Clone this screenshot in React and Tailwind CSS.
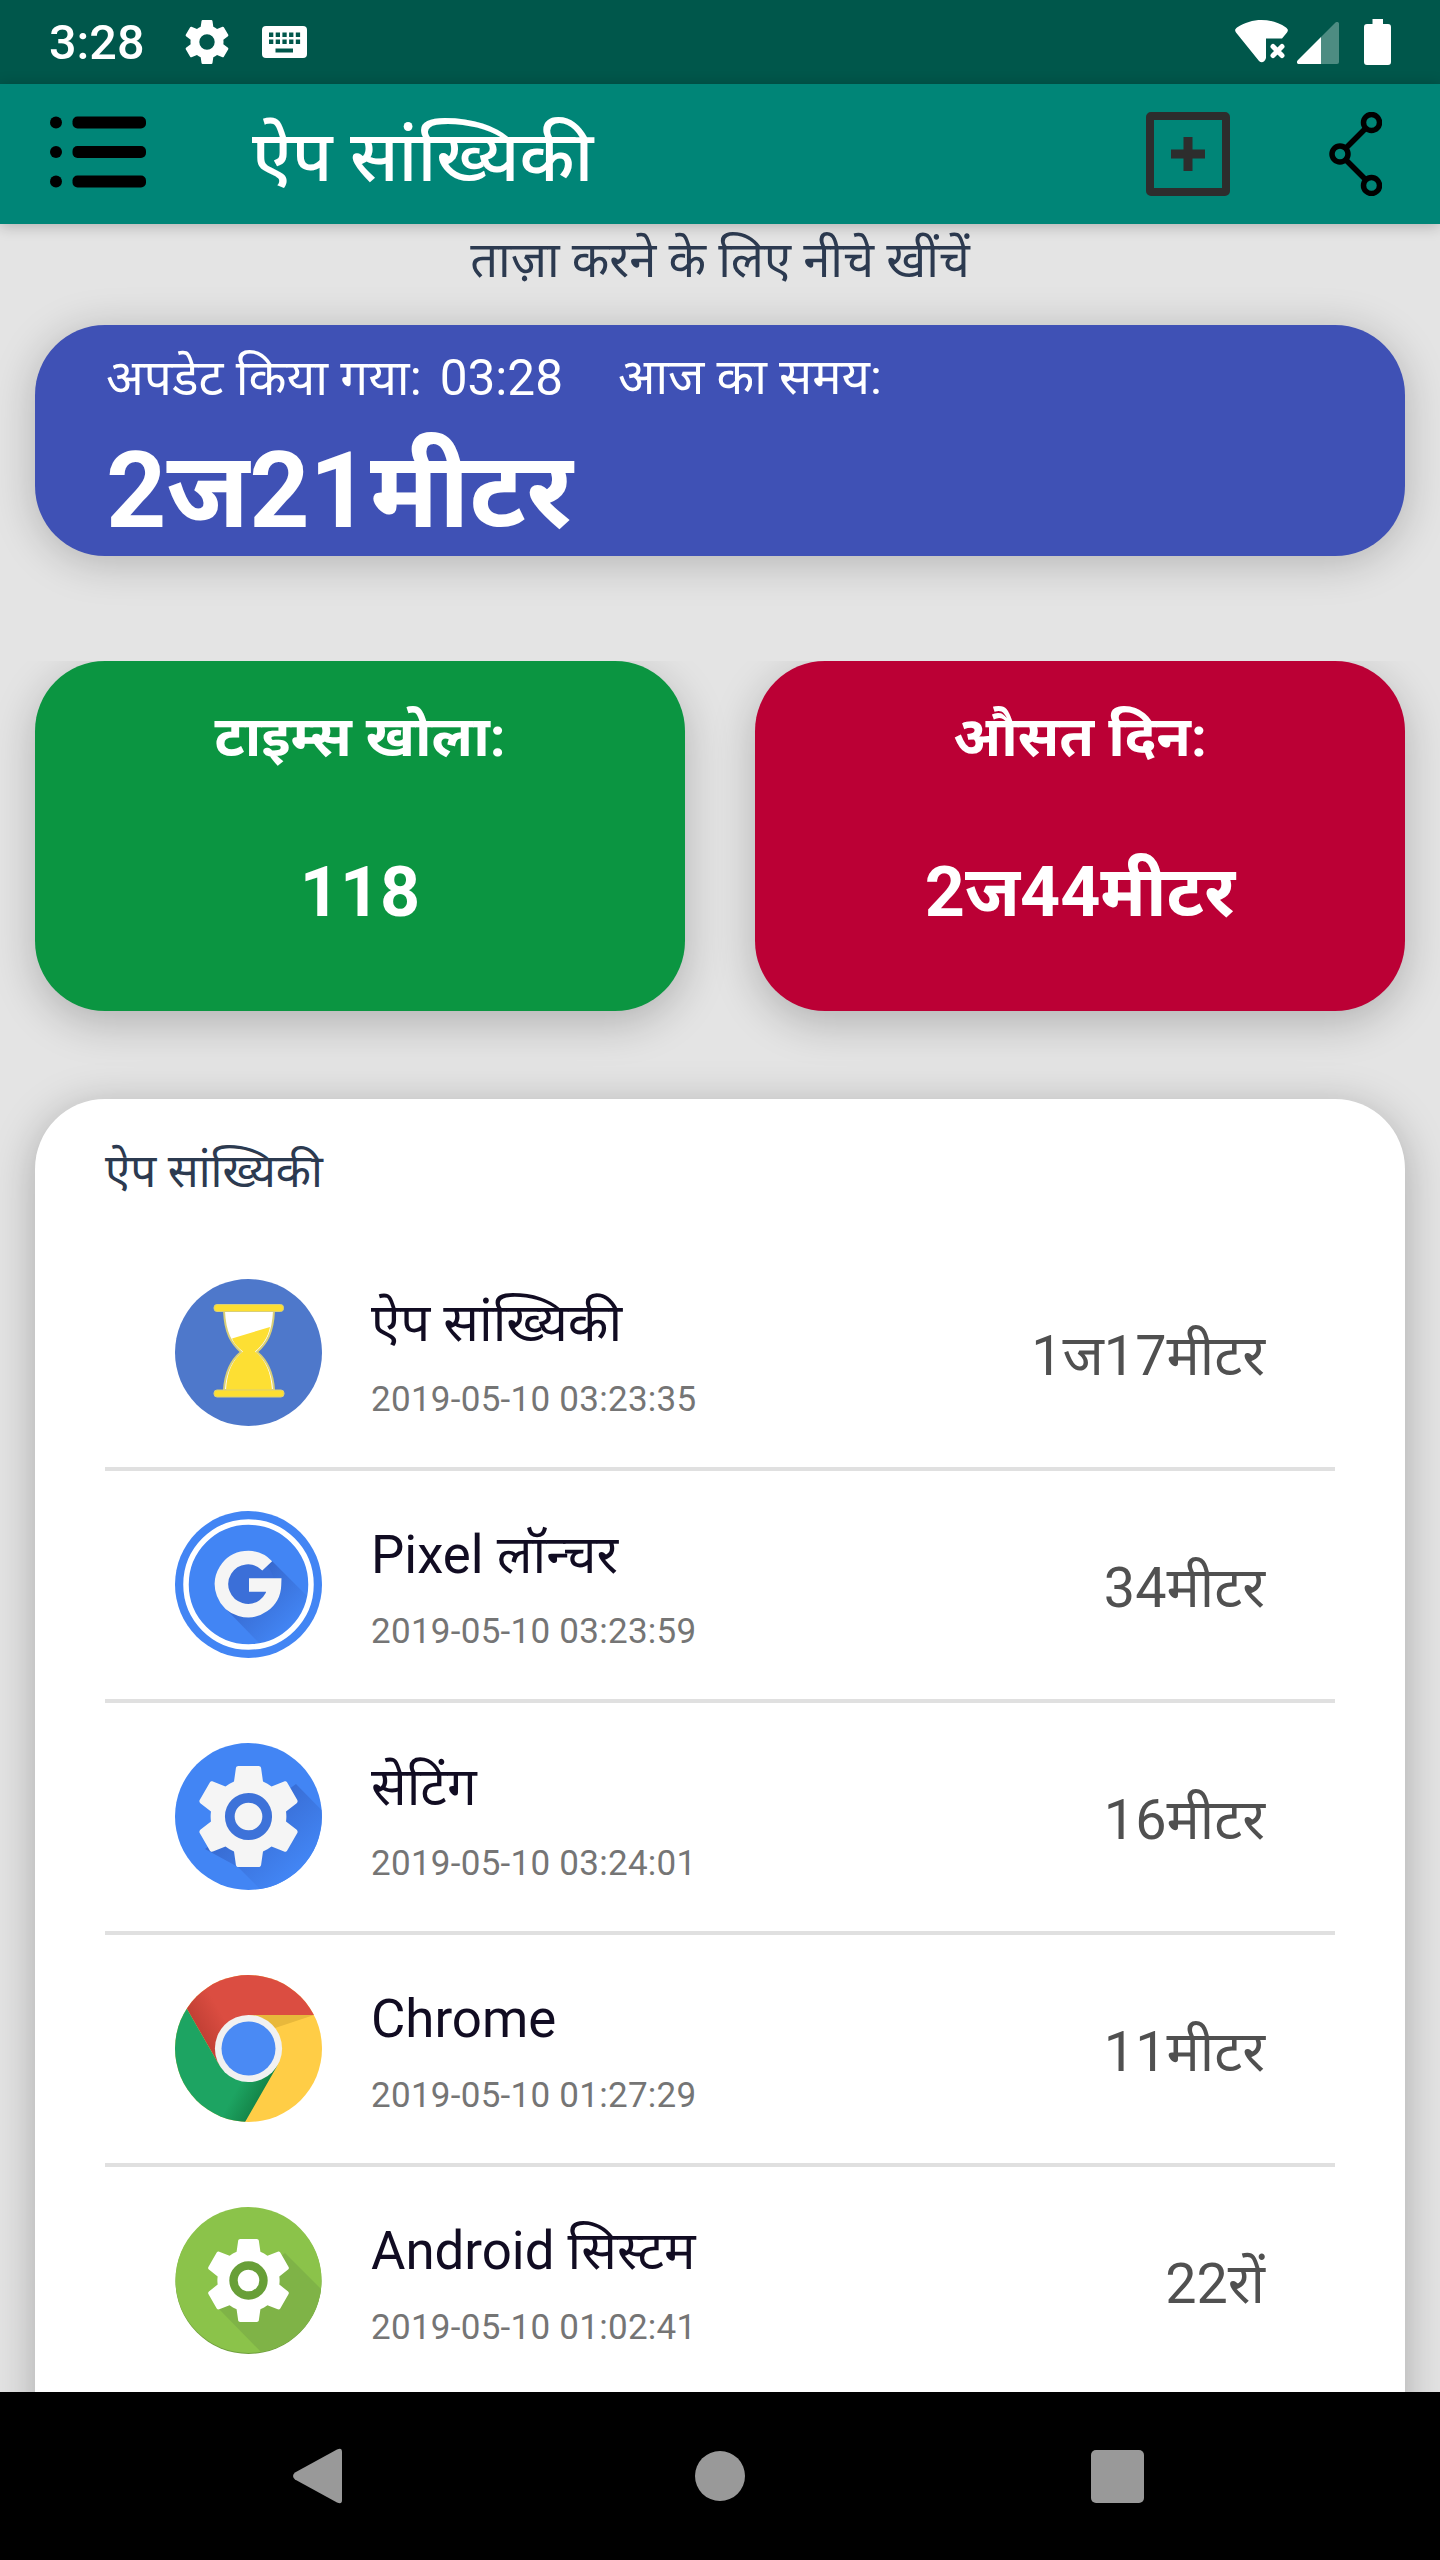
const GEAR =
  'M19.43 12.98c.04-.32.07-.64.07-.98s-.03-.66-.07-.98l2.11-1.65c.19-.15.24-.42.12-.64l-2-3.46c-.12-.22-.39-.3-.61-.22l-2.49 1c-.52-.4-1.08-.73-1.69-.98l-.38-2.65C14.46 2.18 14.25 2 14 2h-4c-.25 0-.46.18-.49.42l-.38 2.65c-.61.25-1.17.59-1.69.98l-2.49-1c-.23-.09-.49 0-.61.22l-2 3.46c-.13.22-.07.49.12.64l2.11 1.65c-.04.32-.07.65-.07.98s.03.66.07.98l-2.11 1.65c-.19.15-.24.42-.12.64l2 3.46c.12.22.39.3.61.22l2.49-1c.52.4 1.08.73 1.69.98l.38 2.65c.03.24.24.42.49.42h4c.25 0 .46-.18.49-.42l.38-2.65c.61-.25 1.17-.59 1.69-.98l2.49 1c.23.09.49 0 .61-.22l2-3.46c.12-.22.07-.49-.12-.64l-2.11-1.65z'

const HourglassIcon = () => (
  <svg viewBox="0 0 147 147" className="mb-[2px] size-[147px]">
    <circle cx="73.5" cy="73.5" r="73.5" fill="#4e78cb" />
    <path
      d="M49 32C50 54 56 64 66 73C55 82 50 94 49 111H99C98 94 93 82 82 73C92 64 98 54 99 32Z"
      fill="#fff"
      stroke="#d9cf78"
      strokeWidth="2"
    />
    <path d="M57 59.5L95 48C93 58 88 66 80 72.5C91 81 96 94 97 111H51C52 94 57 81 68 72.5C62 68 59 64 57 59.5Z" fill="#fddf33" />
    <rect x="39" y="25.5" width="69.5" height="7" rx="3" fill="#fddf33" stroke="#d9cf78" strokeWidth="1" />
    <rect x="39" y="111" width="70" height="7" rx="3" fill="#fddf33" stroke="#d9cf78" strokeWidth="1" />
  </svg>
)

const PixelIcon = () => (
  <svg viewBox="0 0 147 147" className="mb-[2px] size-[147px]">
    <defs>
      <linearGradient id="pixelShade" x1="0.2" y1="0.2" x2="0.8" y2="0.8">
        <stop offset="0" stopColor="#3564c8" />
        <stop offset="1" stopColor="#4285f4" />
      </linearGradient>
    </defs>
    <circle cx="73.5" cy="73.5" r="73.5" fill="#4285f4" />
    <path d="M97 50L132 85A60 60 0 0 1 85 133L50 97Z" fill="url(#pixelShade)" />
    <circle cx="73.5" cy="73.5" r="26" fill="#3b6fd8" />
    <circle cx="73.5" cy="73.5" r="62.5" fill="none" stroke="#fff" strokeWidth="5.5" />
    <path
      d="M92.2 54.8A26.5 26.5 0 1 0 99.5 74H74"
      fill="none"
      stroke="#f5f5f5"
      strokeWidth="13.5"
    />
  </svg>
)

const SettingsIcon = () => (
  <svg viewBox="0 0 147 147" className="mb-[2px] size-[147px]">
    <defs>
      <linearGradient id="settingsShade" x1="0.2" y1="0.2" x2="0.8" y2="0.8">
        <stop offset="0" stopColor="#3564c8" />
        <stop offset="1" stopColor="#4285f4" />
      </linearGradient>
    </defs>
    <circle cx="73.5" cy="73.5" r="73.5" fill="#4285f4" />
    <path d="M121 41L146.5 67A73.5 73.5 0 0 1 85 146L63 124L30 106Z" fill="url(#settingsShade)" />
    <path d={GEAR} transform="translate(12.9 12.9) scale(5.05)" fill="#f5f5f5" />
    <circle cx="73.5" cy="73.5" r="18.7" fill="#f5f5f5" stroke="#3d72d9" strokeWidth="9.7" />
  </svg>
)

const ChromeIcon = () => (
  <svg viewBox="0 0 147 147" className="mb-[2px] size-[147px]">
    <defs>
      <clipPath id="chromeClip">
        <circle cx="73.5" cy="73.5" r="73.5" />
      </clipPath>
      <linearGradient id="chromeRed" gradientUnits="userSpaceOnUse" x1="28" y1="62" x2="52" y2="48">
        <stop offset="0" stopColor="#c24035" />
        <stop offset="1" stopColor="#db4d41" />
      </linearGradient>
      <linearGradient id="chromeGreen" gradientUnits="userSpaceOnUse" x1="90" y1="114" x2="68" y2="102">
        <stop offset="0" stopColor="#148549" />
        <stop offset="1" stopColor="#1da462" />
      </linearGradient>
    </defs>
    <g clipPath="url(#chromeClip)">
      <rect width="147" height="147" fill="#ffcd46" />
      <path d="M73 40H139L100 53Z" fill="#e8b83b" />
      <path d="M-10 -5H150V40H73.5L44.4 90.3L12 34Z" fill="url(#chromeRed)" />
      <path d="M12 34L44.4 90.3L73.5 107L102.6 90.3L69.5 148H-5V10Z" fill="url(#chromeGreen)" />
    </g>
    <circle cx="73.5" cy="73.5" r="33.6" fill="#f1f1f1" />
    <circle cx="73.5" cy="73.5" r="27" fill="#4a8af4" />
  </svg>
)

const AndroidIcon = () => (
  <svg viewBox="0 0 147 147" className="mb-[2px] size-[147px]">
    <circle cx="73.5" cy="74" r="73" fill="#6f9f3d" />
    <circle cx="73.5" cy="73" r="73" fill="#8bc34a" />
    <path d="M110 46L146 82A73 73 0 0 1 86 145L42 100Z" fill="#7fb347" />
    <path d={GEAR} transform="translate(23.7 23.7) scale(4.15)" fill="#fff" />
    <circle cx="73.5" cy="73.5" r="15" fill="#fff" stroke="#689f38" strokeWidth="8.4" />
  </svg>
)

const apps = [
  { name: 'ऐप सांख्यिकी', date: '2019-05-10 03:23:35', time: '1ज17मीटर', Icon: HourglassIcon },
  { name: 'Pixel लॉन्चर', date: '2019-05-10 03:23:59', time: '34मीटर', Icon: PixelIcon },
  { name: 'सेटिंग', date: '2019-05-10 03:24:01', time: '16मीटर', Icon: SettingsIcon },
  { name: 'Chrome', date: '2019-05-10 01:27:29', time: '11मीटर', Icon: ChromeIcon },
  { name: 'Android सिस्टम', date: '2019-05-10 01:02:41', time: '22रों', Icon: AndroidIcon },
]

function StatusBar() {
  return (
    <div className="flex h-[84px] shrink-0 items-center bg-[#00574b] px-[49px] text-white">
      <span className="w-[95px] pt-px text-[48.5px] leading-[83px] font-medium">3:28</span>
      <svg viewBox="2 2 20 20" className="ml-[41px] size-[44px]">
        <path fillRule="evenodd" fill="#fff" d={GEAR + 'M12 15.5A3.5 3.5 0 1 1 12 8.5A3.5 3.5 0 0 1 12 15.5Z'} />
      </svg>
      <svg viewBox="0 0 45 32" className="ml-[33px] h-8 w-[45px]">
        <rect width="45" height="32" rx="4" fill="#fff" />
        {[0, 1, 2, 3, 4].map((i) => (
          <g key={i} fill="#00574b">
            <rect x={7 + i * 6.7} y="6.5" width="4.3" height="4.5" />
            <rect x={7 + i * 6.7} y="13.5" width="4.3" height="4.5" />
          </g>
        ))}
        <rect x="13.5" y="22.5" width="17.5" height="4" fill="#00574b" />
      </svg>
      <div className="ml-auto flex items-center">
        <svg viewBox="0 0 54 43" className="mb-[2px] h-[43px] w-[54px]">
          <path d="M1 12.5C-.5 10.500 0 9 2 7.5C17-2.500 36-2.500 51 7.5C53 9 53.500 10.500 52 12.5L47 18.500H31V38C29.500 42.500 26.500 43.500 24 41Z" fill="#fff" />
          <path d="M38 26.500L47 35.500M47 26.500L38 35.500" stroke="#fff" strokeWidth="5" strokeLinecap="round" />
        </svg>
        <svg viewBox="0 0 42 42" className="ml-2 mt-[2px] size-[42px]">
          <path d="M24 15L38 1C40-1 42 0 42 2V40Q42 42 40 42H24Z" fill="#4d8c82" />
          <path d="M24 15V42H2C0 42-1 40 1 38Z" fill="#fff" />
        </svg>
        <svg viewBox="0 0 27 46" className="ml-[25px] h-[46px] w-[27px]">
          <path d="M8.500 0H19V5H24Q27 5 27 8V43Q27 46 24 46H3Q0 46 0 43V8Q0 5 3 5H8.500Z" fill="#fff" />
        </svg>
      </div>
    </div>
  )
}

function AppBar() {
  return (
    <header className="z-10 flex h-[140px] shrink-0 items-center bg-[#008577] pr-[58px] pl-[50px] shadow-[0_2px_14px_rgba(0,0,0,0.24)]">
      <svg viewBox="0 0 97 72" className="mb-1 h-[72px] w-[97px]">
        {[6.5, 36, 65.5].map((y) => (
          <g key={y}>
            <circle cx="6" cy={y} r="6" />
            <rect x="22.5" y={y - 6} width="73.5" height="12" rx="5" />
          </g>
        ))}
      </svg>
      <h1 className="ml-[105px] pt-1.5 text-[70px] leading-[130px] font-medium text-white">ऐप सांख्यिकी</h1>
      <svg viewBox="0 0 84 84" className="ml-auto size-[84px]" fill="none" stroke="#2d2d2d">
        <rect x="4" y="4" width="76" height="76" rx="1" strokeWidth="8" />
        <path d="M42 25V59M25 42H59" strokeWidth="9" />
      </svg>
      <svg viewBox="0 0 54 84" className="ml-[98px] h-[84px] w-[54px]" fill="none" stroke="#000" strokeWidth="5.5">
        <circle cx="43.5" cy="10.5" r="8" />
        <circle cx="12" cy="42" r="8" />
        <circle cx="43.5" cy="73.5" r="8" />
        <path d="M17.5 36.5L38 16M17.5 47.5L38 68" />
      </svg>
    </header>
  )
}

function StatCard({ title, value, color }) {
  return (
    <div className={`h-[350px] w-[650px] rounded-[70px] pt-[41px] text-center font-bold text-white shadow-[0_12px_44px_rgba(0,0,0,0.22)] ${color}`}>
      <p className="text-[56.3px] leading-[70px]">{title}</p>
      <p className="mt-20 text-[70px] leading-[80px]">{value}</p>
    </div>
  )
}

function AppRow({ name, date, time, Icon }) {
  return (
    <li className="flex h-[232px] items-center border-b-4 border-[#e0e0e0] px-[70px]">
      <Icon />
      <div className="ml-[49px] pt-[2px]">
        <p className="text-[52.8px] leading-[70px] text-[#110c22]">{name}</p>
        <p className="mt-[22px] text-[35px] leading-[40px] tracking-[0.27px] text-[#757575]">{date}</p>
      </div>
      <span className="ml-auto pt-1.5 text-[55.7px] leading-[70px] text-[#505050]">{time}</span>
    </li>
  )
}

function NavBar() {
  return (
    <nav className="z-10 flex h-[168px] shrink-0 items-center bg-black pr-[296px] pl-[293px]">
      <svg viewBox="0 0 49 56" className="h-14 w-[49px]">
        <path d="M2 24.5L44 1.5Q49-1 49 4V52Q49 57 44 54.5L2 31.5Q-2 28 2 24.5Z" fill="#999" />
      </svg>
      <div className="ml-[353px] size-[50px] rounded-full bg-[#999]" />
      <div className="ml-auto size-[53px] rounded-[5px] bg-[#999]" />
    </nav>
  )
}

function App() {
  return (
    <div className="flex h-[2560px] w-[1440px] flex-col overflow-hidden bg-[#e4e4e4] font-[Roboto,'Noto_Sans','Noto_Sans_Devanagari',sans-serif]">
      <StatusBar />
      <AppBar />

      <main className="min-h-0 flex-1 overflow-hidden px-[35px] pt-1.5">
        <p className="text-center text-[48.9px] leading-[62px] text-[#2c3a50]">ताज़ा करने के लिए नीचे खींचें</p>

        {/* Today */}
        <section className="mt-[33px] h-[231px] rounded-[70px] bg-[#3f51b5] px-[71px] pt-[21px] text-white shadow-[0_6px_44px_rgba(0,0,0,0.22)]">
          <div className="flex text-[49.5px] leading-[64px]">
            <span>अपडेट किया गया:</span>
            <span className="ml-[18px]">03:28</span>
            <span className="ml-[55px] text-[49px]">आज का समय:</span>
          </div>
          <p className="mt-[26px] text-[105.3px] leading-[110px] font-bold">2ज21मीटर</p>
        </section>

        {/* Totals */}
        <section className="mt-[105px] flex justify-between [clip-path:inset(0_-35px_-80px)]">
          <StatCard title="टाइम्स खोला:" value="118" color="bg-[#0b9541]" />
          <StatCard title="औसत दिन:" value="2ज44मीटर" color="bg-[#bb0035]" />
        </section>

        {/* App list */}
        <section className="mt-[88px] h-[1500px] rounded-[70px] bg-white px-[70px] shadow-[0_8px_44px_rgba(0,0,0,0.26)]">
          <h2 className="h-[140px] pt-[42px] text-[45.8px] leading-[62px] text-[#2c3a50]">ऐप सांख्यिकी</h2>
          <ul>
            {apps.map((app) => (
              <AppRow key={app.name} {...app} />
            ))}
          </ul>
        </section>
      </main>

      <NavBar />
    </div>
  )
}

export default App
